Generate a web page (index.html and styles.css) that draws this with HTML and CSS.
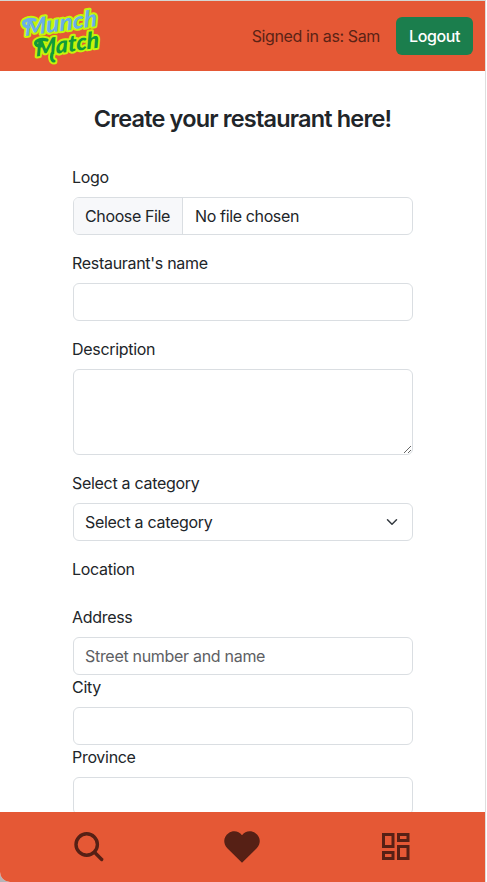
FILE: index.html
```html
<!DOCTYPE html>
<html lang="en">
<head>
<meta charset="utf-8">
<title>Munch Match</title>
<link rel="stylesheet" href="styles.css">
</head>
<body>
<div class="app">
  <header class="topbar">
    <svg class="logo" width="90" height="66" viewBox="0 0 90 66" aria-label="Munch Match">
      <path class="swash edge" d="M14 24c-6 0-7-5-3-6.500 3-1.500 6-1.500 9-.5M26 43c-6 0-7-4-3-5.500 3-1.500 6-1.500 9-.5M37 51c-1 4 0 7 2 7"/>
      <g class="logo-text">
        <text class="munch" transform="translate(10 33) rotate(-8) skewX(-6)" textLength="73" lengthAdjust="spacingAndGlyphs">Munch</text>
        <text class="match" transform="translate(21 53.500) rotate(-8) skewX(-6)" textLength="64" lengthAdjust="spacingAndGlyphs">Match</text>
      </g>
      <path class="swash munch-line" d="M14 24c-6 0-7-5-3-6.500 3-1.500 6-1.500 9-.5"/>
      <path class="swash match-line" d="M26 43c-6 0-7-4-3-5.500 3-1.500 6-1.500 9-.5M37 51c-1 4 0 7 2 7"/>
    </svg>
    <div class="account">
      <span class="signed">Signed in as: Sam</span>
      <button class="logout" type="button">Logout</button>
    </div>
  </header>
  <main class="content">
    <h1>Create your restaurant here!</h1>
    <form>
      <div class="field">
        <label for="logo">Logo</label>
        <input class="control" id="logo" type="file">
      </div>
      <div class="field">
        <label for="name">Restaurant's name</label>
        <input class="control" id="name" type="text">
      </div>
      <div class="field">
        <label for="desc">Description</label>
        <textarea class="control" id="desc"></textarea>
      </div>
      <div class="field">
        <label for="cat">Select a category</label>
        <div class="select-wrap">
          <select class="control" id="cat"><option>Select a category</option></select>
          <svg class="chevron" width="12" height="12" viewBox="0 0 16 16"><path d="m2 5 6 6 6-6"/></svg>
        </div>
      </div>
      <p class="section">Location</p>
      <div>
        <label for="address">Address</label>
        <input class="control" id="address" type="text" placeholder="Street number and name">
      </div>
      <div>
        <label for="city">City</label>
        <input class="control" id="city" type="text">
      </div>
      <div>
        <label for="province">Province</label>
        <input class="control" id="province" type="text">
      </div>
    </form>
  </main>
  <nav class="bottombar">
    <svg width="36" height="36" viewBox="0 0 36 36"><g class="line round"><circle cx="16.7" cy="15.5" r="10.7"/><path d="m24.5 23.3 7.2 7.2"/></g></svg>
    <svg width="36" height="36" viewBox="0 0 36 36"><path class="solid" d="M18 33.8 3.3 19.3C-1.5 14.3-.3 7.4 4.5 4.2 8.8 1.2 14.8 1.8 18 6.3c3.2-4.5 9.2-5.1 13.5-2.1 4.8 3.2 6 10.1 1.2 15.1Z"/></svg>
    <svg width="36" height="36" viewBox="0 0 36 36"><path class="line" d="M5.5 5.5h9.5v12H5.500ZM20.500 5.500H30v6H20.500ZM5.500 23.500h9.500v6H5.500ZM20.500 17.500H30v12H20.500Z"/></svg>
  </nav>
</div>
</body>
</html>
```

FILE: styles.css
```css
* { box-sizing: border-box; }
body {
  margin: 0;
  height: 882px;
  overflow: hidden;
  background: linear-gradient(to right, #b5b5b8 100px, #fff 100px);
  color: #212529;
  font: 16px/24px Inter, "Liberation Sans", sans-serif;
  letter-spacing: -.3px;
}
.app {
  display: flex;
  flex-direction: column;
  width: 486px;
  height: 882px;
  border-top: 1px solid #d4d6d2;
  border-right: 1px solid #dedede;
  border-bottom-left-radius: 10px;
  background: #fff;
  overflow: hidden;
}
.topbar {
  display: flex;
  flex: none;
  align-items: center;
  justify-content: space-between;
  height: 70px;
  padding: 0 12px 0 15px;
  background: #e55835;
}
.logo-text {
  font: italic 900 23px Lato, sans-serif;
  letter-spacing: 0;
  stroke: #c5f50a;
  stroke-width: 4px;
  stroke-linejoin: round;
  paint-order: stroke;
}
.munch { fill: #6aaee8; }
.match { fill: #12993c; }
.swash { fill: none; stroke-width: 3.2; stroke-linecap: round; }
.edge { stroke: #c5f50a; stroke-width: 7; }
.munch-line { stroke: #6aaee8; }
.match-line { stroke: #12993c; }
.account { display: flex; align-items: center; gap: 16px; }
.signed { color: #5b2315; letter-spacing: -.37px; }
.logout {
  width: 77px;
  height: 38px;
  padding: 0;
  border: 0;
  border-radius: 6px;
  background: #1b7e4d;
  color: #fff;
  font: inherit;
  font-weight: 500;
  letter-spacing: -.4px;
}
.content {
  flex: 1;
  min-height: 0;
  overflow: hidden;
  padding: 33px 72px 0 73px;
}
h1 {
  margin: 0 -19px 32px -20px;
  font-size: 23.5px;
  line-height: 29px;
  font-weight: 570;
  letter-spacing: -.83px;
  text-align: center;
}
.field { margin-bottom: 16px; }
label { display: block; margin: 0 0 8px -1px; }
.section { margin: 0 0 24px -1px; }
.control {
  display: block;
  width: 100%;
  height: 38px;
  margin: 0;
  padding: 6px 11px;
  border: 1px solid #dadee2;
  border-radius: 6px;
  background: #fff;
  color: #212529;
  font: inherit;
  letter-spacing: inherit;
  appearance: none;
  overflow: hidden;
}
.control[type="file"] { letter-spacing: -.37px; }
.control::placeholder { color: #5d6063; opacity: 1; }
.control::file-selector-button {
  margin: -6px 12px -6px -11px;
  padding: 6px 12px 6px 11px;
  border: 0 solid #dadee2;
  border-right-width: 1px;
  border-radius: 0;
  background: #f7f8fa;
  color: #212529;
  font: inherit;
  letter-spacing: inherit;
}
textarea.control { height: 86px; resize: vertical; }
.select-wrap { position: relative; }
.chevron {
  position: absolute;
  top: 13px;
  right: 15px;
  fill: none;
  stroke: #343a40;
  stroke-width: 2;
  stroke-linecap: round;
  stroke-linejoin: round;
}
.bottombar {
  display: flex;
  flex: none;
  align-items: center;
  justify-content: space-between;
  height: 70px;
  padding: 0 71px 0 70px;
  background: #e55835;
}
.line { fill: none; stroke: #562015; stroke-width: 3; }
.round { stroke-linecap: round; stroke-width: 3.4; }
.solid { fill: #562015; }
```
